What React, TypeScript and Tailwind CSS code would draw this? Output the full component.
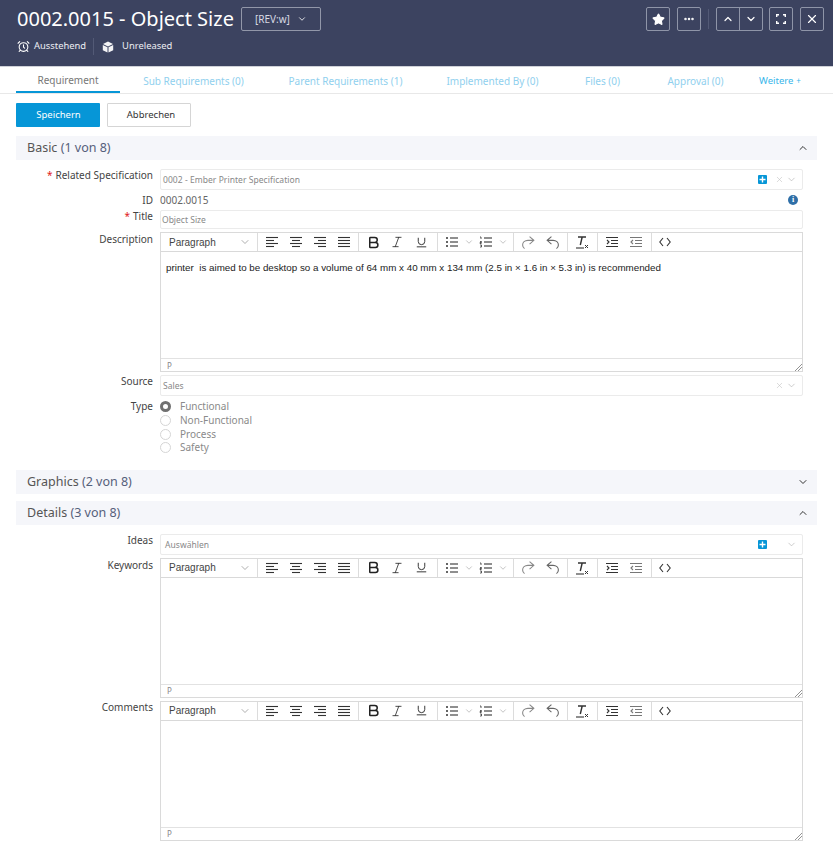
import { AlarmClock, Bold, ChevronDown, ChevronUp, Ellipsis, Italic, Star, Underline, X } from 'lucide-react'
import type { ReactNode } from 'react'

const FONT = "font-['Noto_Sans',sans-serif]"

const TABS = [
  { label: 'Sub Requirements (0)', w: 'w-[147px]' },
  { label: 'Parent Requirements (1)', w: 'w-[157px]' },
  { label: 'Implemented By (0)', w: 'w-[137px]' },
  { label: 'Files (0)', w: 'w-[83px]' },
  { label: 'Approval (0)', w: 'w-[103px]' },
]

const Lines = ({ rows }: { rows: [number, number][] }) => (
  <svg width="12" height="12" viewBox="0 0 12 12" stroke="#333" strokeWidth="1.1">
    {rows.map(([a, b], i) => (
      <line key={i} x1={a} x2={b} y1={1.5 + i * 3} y2={1.5 + i * 3} />
    ))}
  </svg>
)

const ListIcon = ({ numbered }: { numbered?: boolean }) => (
  <svg width="13" height="12" viewBox="0 0 13 12" stroke="#333" strokeWidth="1.1">
    <line x1="5" x2="13" y1="2" y2="2" />
    <line x1="5" x2="13" y1="6" y2="6" />
    <line x1="5" x2="13" y1="10" y2="10" />
    {numbered ? (
      <path d="M1 1h1v2M1 5.5h1.5v1H1v1h1.5M1 9h1.5v2H1" fill="none" strokeWidth="0.8" />
    ) : (
      <path d="M1 2h2M1 6h2M1 10h2" strokeWidth="1.6" />
    )}
  </svg>
)

const RedoIcon = ({ flip }: { flip?: boolean }) => (
  <svg width="15" height="15" viewBox="0 0 14 14" fill="none" stroke={flip ? '#666' : '#888'} strokeWidth="1" className={flip ? '-scale-x-100' : ''}>
    <path d="M8 1.5 12 5 8 8.5M12 5H6.5C3.5 5 1.5 7 1.5 9.3c0 1.6.8 2.7 1.8 3.4" />
  </svg>
)

const ClearIcon = () => (
  <svg width="14" height="14" viewBox="0 0 14 14" fill="none" stroke="#333">
    <path d="M3 2h8M7.2 2 5.3 10" strokeWidth="1.4" />
    <path d="M1 13h8" strokeWidth="1.1" />
    <path d="M10 10l3 3M13 10l-3 3" strokeWidth="1" />
  </svg>
)

const IndentIcon = ({ out }: { out?: boolean }) => (
  <svg width="12" height="12" viewBox="0 0 12 12" fill="none" stroke={out ? '#777' : '#333'} strokeWidth="1.1">
    <path d="M0 1.5h12M5 4.5h7M5 7.5h7M0 10.5h12" />
    <path d={out ? 'M3 4 1 6l2 2' : 'M1 4l2 2-2 2'} />
  </svg>
)

const Sep = () => <div className="w-px self-stretch bg-[#dcdcdc]" />

const Cell = ({ w = 'w-6', children }: { w?: string; children: ReactNode }) => (
  <div className={`${w} flex items-center justify-center`}>{children}</div>
)

function Toolbar() {
  return (
    <div className="flex h-[19px] items-center border-b border-[#d9d9d9]">
      <div className="flex w-[96px] items-center justify-between pl-[8px] pr-[6px] font-['Liberation_Sans',sans-serif] text-[10px] text-[#444]">
        Paragraph
        <ChevronDown size={12} strokeWidth={1.2} color="#777" />
      </div>
      <Sep />
      <div className="flex w-[100px] px-[2px]">
        <Cell><Lines rows={[[0, 12], [0, 8], [0, 12], [0, 8]]} /></Cell>
        <Cell><Lines rows={[[0, 12], [2, 10], [0, 12], [2, 10]]} /></Cell>
        <Cell><Lines rows={[[0, 12], [4, 12], [0, 12], [4, 12]]} /></Cell>
        <Cell><Lines rows={[[0, 12], [0, 12], [0, 12], [0, 12]]} /></Cell>
      </div>
      <Sep />
      <div className="flex w-[78px] px-[2px]">
        <Cell><Bold size={15} strokeWidth={2.4} color="#222" /></Cell>
        <Cell><Italic size={14} strokeWidth={1.5} color="#333" /></Cell>
        <Cell><Underline size={13} strokeWidth={1.8} color="#333" /></Cell>
      </div>
      <Sep />
      <div className="flex w-[75px] items-center pl-[7px]">
        <ListIcon />
        <ChevronDown size={10} strokeWidth={1.2} color="#888" className="ml-[6px]" />
        <span className="ml-[5px]"><ListIcon numbered /></span>
        <ChevronDown size={10} strokeWidth={1.2} color="#888" className="ml-[6px]" />
      </div>
      <Sep />
      <div className="flex w-[53px] px-[2px]">
        <Cell><RedoIcon /></Cell>
        <Cell><RedoIcon flip /></Cell>
      </div>
      <Sep />
      <div className="flex w-[29px] justify-center pr-[2px]"><ClearIcon /></div>
      <Sep />
      <div className="flex w-[53px] pl-[2px]">
        <Cell><IndentIcon /></Cell>
        <Cell w="w-[23px]"><IndentIcon out /></Cell>
      </div>
      <Sep />
      <div className="ml-[7px] flex items-center text-[#333]">
        <svg width="12" height="10" viewBox="0 0 12 10" fill="none" stroke="#333" strokeWidth="1.1">
          <path d="M4 1 .8 5 4 9M8 1l3.2 4L8 9" />
        </svg>
      </div>
    </div>
  )
}

function Editor({ children }: { children?: ReactNode }) {
  return (
    <div className="relative flex-1 border border-[#dadada] bg-white">
      <Toolbar />
      <div className="h-[107px] border-b border-[#e2e2e2] pl-[5px] pt-[9px] font-['Liberation_Sans',sans-serif] text-[9.8px] text-[#222]">
        {children}
      </div>
      <div className="flex h-[12px] items-center px-[6px] pt-[1px] text-[8px] text-[#888]">P</div>
      <svg width="8" height="8" viewBox="0 0 8 8" stroke="#777" strokeWidth="0.8" className="absolute bottom-0 right-0">
        <path d="M1 8l7-7M4 8l4-4" />
      </svg>
    </div>
  )
}

function Row({ label, req, mt, nudge, children }: { label: string; req?: boolean; mt?: string; nudge?: string; children: ReactNode }) {
  return (
    <div className={`flex ${mt ?? ''}`}>
      <div className={`w-[137px] shrink-0 text-right text-[10px] leading-[14px] text-[#444] ${nudge ?? ''}`}>
        {req && <span className="mr-[3px] text-[#e02020]">*</span>}
        {label}
      </div>
      <div className="ml-[7px] flex w-[643px] shrink-0">{children}</div>
    </div>
  )
}

function SelectBox({ text, plus }: { text: string; plus?: boolean }) {
  return (
    <div className="flex h-[21px] flex-1 items-center rounded-[2px] border border-[#ebebeb] bg-white pl-[2px] pr-[5px] text-[8.5px] tracking-[0.05px] text-[#888]">
      <span className={`flex-1 ${text === 'Auswählen' ? 'pl-[2px] pt-[3px]' : 'pt-[1px]'}`}>{text}</span>
      {plus && (
        <span className="mr-[8px] flex h-[9px] w-[9px] items-center justify-center rounded-[1px] bg-[#0696d7] text-white">
          <svg width="7" height="7" viewBox="0 0 7 7" stroke="white" strokeWidth="1.4"><path d="M3.5 .5v6M.5 3.5h6" /></svg>
        </span>
      )}
      <X size={9} strokeWidth={1.4} color={text === 'Auswählen' ? '#fff' : '#bbb'} className="mr-[2px]" />
      <ChevronDown size={11} strokeWidth={1.3} color="#aaa" />
    </div>
  )
}

function Section({ title, count, open, mt }: { title: string; count: string; open?: boolean; mt?: string }) {
  return (
    <div className={`mx-4 flex h-6 items-center bg-[#f5f6fa] pl-[11px] pr-[8px] text-[12.5px] text-[#555] ${mt ?? ''}`}>
      <span className="flex-1 pt-[1px]">
        {title} <span className="text-[#55607a]">{count}</span>
      </span>
      {open ? <ChevronUp size={12} strokeWidth={2} color="#333" /> : <ChevronDown size={12} strokeWidth={2} color="#333" />}
    </div>
  )
}

const HeadBtn = ({ children }: { children: ReactNode }) => (
  <div className="flex h-6 w-6 items-center justify-center rounded-[2px] border border-[#8f95a8]">{children}</div>
)

export default function App() {
  return (
    <div className={`h-[850px] w-[833px] overflow-hidden bg-white ${FONT}`}>
      {/* Header */}
      <div className="flex h-[67px] items-start justify-between border-b border-[#cfd1d8] bg-[#3c4360] pl-[17px] pr-[9px] pt-[7px]">
        <div>
          <div className="flex items-center">
            <h1 className="text-[20px] leading-[24px] text-white">0002.0015 - Object Size</h1>
            <div className="ml-[7px] flex h-6 w-[80px] items-center justify-center gap-[7px] rounded-[2px] border border-[#9297a9] text-[10px] text-[#d8dae3]">
              [REV:w]
              <ChevronDown size={10} strokeWidth={2} color="#fff" />
            </div>
          </div>
          <div className="mt-[7px] flex h-[17px] items-center text-[9.4px] text-[#eceef3]">
            <AlarmClock size={13} strokeWidth={2} color="#fff" />
            <span className="ml-[4px]">Ausstehend</span>
            <span className="ml-[7px] h-[17px] w-px bg-[#535a76]" />
            <svg width="12" height="12" viewBox="0 0 12 12" className="ml-[8px]" fill="#f4f4f6">
              <path d="M6 .5 11 3 6 5.5 1 3zM.8 4l4.7 2.3v5.2L.8 9.2zM11.2 4 6.5 6.3v5.2l4.7-2.3z" />
            </svg>
            <span className="ml-[8px]">Unreleased</span>
          </div>
        </div>
        <div className="flex items-center">
          <HeadBtn><Star size={13} fill="#fff" color="#fff" /></HeadBtn>
          <div className="ml-[7px]"><HeadBtn><Ellipsis size={12} strokeWidth={3} color="#fff" /></HeadBtn></div>
          <span className="ml-[7px] h-[20px] w-px bg-[#535a76]" />
          <div className="ml-[7px] flex h-6 w-[47px] rounded-[2px] border border-[#8f95a8]">
            <div className="flex flex-1 items-center justify-center border-r border-[#8f95a8]"><ChevronUp size={12} strokeWidth={2.4} color="#fff" /></div>
            <div className="flex flex-1 items-center justify-center"><ChevronDown size={12} strokeWidth={2.4} color="#fff" /></div>
          </div>
          <div className="ml-[6px]">
            <HeadBtn>
              <svg width="10" height="10" viewBox="0 0 10 10" fill="none" stroke="#fff" strokeWidth="1.4">
                <path d="M.7 3V.7H3M7 .7h2.3V3M9.3 7v2.3H7M3 9.3H.7V7" />
              </svg>
            </HeadBtn>
          </div>
          <div className="ml-[7px]"><HeadBtn><X size={14} strokeWidth={2} color="#fff" /></HeadBtn></div>
        </div>
      </div>

      {/* Tabs */}
      <div className="flex h-[27px] items-stretch border-b border-[#e8e8e8] pl-4 text-[10px] text-[#90d0ee]">
        <div className="flex w-[104px] items-center justify-center border-b-2 border-[#0696d7] pt-[3px] text-[#777]">Requirement</div>
        {TABS.map((t) => (
          <div key={t.label} className={`flex items-center justify-center pt-[2px] ${t.w}`}>{t.label}</div>
        ))}
        <div className="ml-[12px] flex items-center gap-[3px] whitespace-nowrap pt-[2px] text-[9.5px] text-[#38b6ea]">
          Weitere <span className="text-[8px]">+</span>
        </div>
      </div>

      {/* Actions */}
      <div className="ml-4 mt-[9px] flex gap-[7px] text-[9.5px]">
        <div className="flex h-6 w-[84px] items-center justify-center rounded-[1px] bg-[#0696d7] pl-[1px] text-white">Speichern</div>
        <div className="flex h-6 w-[84px] items-center justify-center rounded-[1px] border border-[#d5d5d5] pl-[4px] text-[#333]">Abbrechen</div>
      </div>

      <Section title="Basic" count="(1 von 8)" open mt="mt-[9px]" />
      <div className="ml-4 mt-[9px]">
        <Row label="Related Specification" req nudge="-mt-[1px]">
          <SelectBox text="0002 - Ember Printer Specification" plus />
        </Row>
        <Row label="ID" mt="mt-[3px]">
          <div className="flex h-[14px] flex-1 items-center justify-between text-[10px] text-[#666]">
            0002.0015
            <span className="mr-[5px] flex h-[10px] w-[10px] items-center justify-center rounded-full bg-[#2f6fa8] font-['Liberation_Serif',serif] text-[8px] font-bold text-white">i</span>
          </div>
        </Row>
        <Row label="Title" req mt="mt-[3px]" nudge="-mt-[1px]">
          <div className="flex h-[19px] flex-1 items-center rounded-[2px] border border-[#ebebeb] pl-[1px] pt-[1px] text-[8.5px] text-[#888]">Object Size</div>
        </Row>
        <Row label="Description" mt="mt-[3px]">
          <Editor>printer&nbsp; is aimed to be desktop so a volume of 64 mm x 40 mm x 134 mm (2.5 in × 1.6 in × 5.3 in) is recommended</Editor>
        </Row>
        <Row label="Source" mt="mt-[3px]" nudge="-mt-[1px]">
          <SelectBox text="Sales" />
        </Row>
        <Row label="Type" mt="mt-[4px]" nudge="-mt-[1px]">
          <div className="flex flex-col text-[10px] text-[#8a8a8a]">
            {['Functional', 'Non-Functional', 'Process', 'Safety'].map((t, i) => (
              <div key={t} className="flex h-[13.67px] items-center">
                <span className={`h-[11px] w-[11px] rounded-full ${i === 0 ? 'border-[3px] border-[#707070]' : 'border border-[#d5d5d5]'}`} />
                <span className="ml-[9px]">{t}</span>
              </div>
            ))}
          </div>
        </Row>
      </div>

      <Section title="Graphics" count="(2 von 8)" mt="mt-[15px]" />
      <Section title="Details" count="(3 von 8)" open mt="mt-[7px]" />
      <div className="ml-4 mt-[9px]">
        <Row label="Ideas" nudge="-mt-[1px]">
          <SelectBox text="Auswählen" plus />
        </Row>
        <Row label="Keywords" mt="mt-[3px]">
          <Editor />
        </Row>
        <Row label="Comments" mt="mt-[3px]" nudge="-mt-[1px]">
          <Editor />
        </Row>
      </div>
    </div>
  )
}
